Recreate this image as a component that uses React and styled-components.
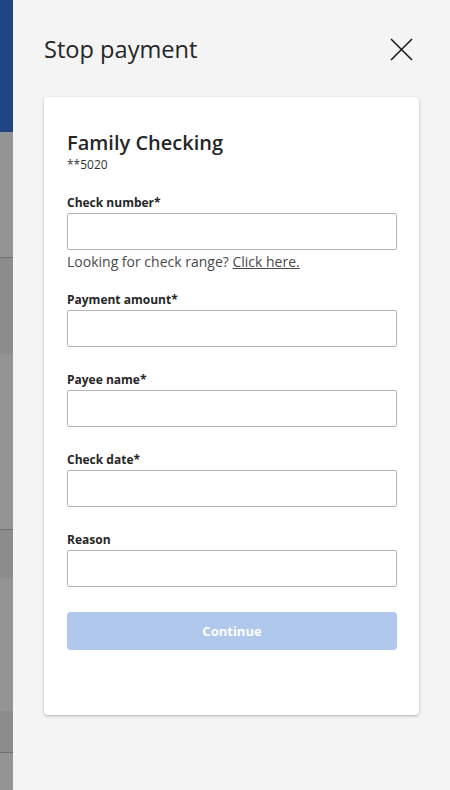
import React from 'react';
import styled, { createGlobalStyle } from 'styled-components';

const GlobalStyle = createGlobalStyle`
  html, body {
    margin: 0;
    padding: 0;
    background: #f4f4f4;
  }
  body {
    font-family: "Open Sans", "Noto Sans", sans-serif;
    color: #262626;
  }
  * {
    box-sizing: border-box;
  }
`;

const Page = styled.div`
  display: flex;
  width: 450px;
  height: 790px;
  overflow: hidden;
`;

const Strip = styled.div`
  display: flex;
  flex-direction: column;
  width: 13px;
  flex-shrink: 0;
`;

const tones = {
  blue: '#1f4582',
  gray: '#949494',
  dark: '#8c8c8c',
  line: '#707070',
};

const StripBlock = styled.div`
  height: ${(p) => p.$h}px;
  flex-shrink: 0;
  background: ${(p) => tones[p.$tone]};
`;

const StripRest = styled.div`
  flex: 1;
  background: ${tones.gray};
`;

const Panel = styled.div`
  flex: 1;
  background: #f4f4f4;
  padding: 33px 31px 0 31px;
`;

const Header = styled.div`
  display: flex;
  align-items: center;
  justify-content: space-between;
  height: 32px;
  padding-right: 6px;
`;

const Title = styled.h1`
  margin: 0;
  font-size: 23.6px;
  line-height: 32px;
  font-weight: 400;
  color: #262626;
`;

const CloseButton = styled.button`
  display: flex;
  align-items: center;
  justify-content: center;
  width: 23px;
  height: 23px;
  padding: 0;
  border: none;
  background: none;
  cursor: pointer;
  color: #1a1a1a;
`;

const Card = styled.div`
  margin-top: 32px;
  background: #ffffff;
  border-radius: 4px;
  box-shadow: 0 1px 3px rgba(0, 0, 0, 0.28);
  padding: 32px 22px 65px 23px;
`;

const AccountName = styled.h2`
  margin: 0;
  font-size: 20px;
  line-height: 28px;
  font-weight: 600;
  color: #262626;
`;

const AccountNumber = styled.div`
  font-size: 12px;
  line-height: 16px;
  color: #333333;
`;

const Form = styled.form`
  display: flex;
  flex-direction: column;
  gap: 25px;
  margin-top: 22px;
`;

const Field = styled.div`
  display: flex;
  flex-direction: column;
`;

const Label = styled.label`
  font-size: 12px;
  line-height: 16px;
  font-weight: 700;
  color: #262626;
  margin-bottom: 2px;
`;

const Input = styled.input`
  width: 100%;
  height: 37px;
  border: 1px solid #b5b5b5;
  border-radius: 2px;
  background: #fff;
  font-family: inherit;
  font-size: 14px;
  padding: 0 10px;
  outline: none;
`;

const Helper = styled.div`
  margin: 4px 0 -3px;
  font-size: 14px;
  line-height: 16px;
  color: #4a4a4a;

  a {
    color: #4a4a4a;
    text-decoration: underline;
  }
`;

const Submit = styled.button`
  height: 38px;
  width: 100%;
  border: none;
  border-radius: 4px;
  background: #b0c8ec;
  color: #ffffff;
  font-family: inherit;
  font-size: 13px;
  font-weight: 700;
  cursor: not-allowed;
`;

const stripBlocks = [
  { h: 132, tone: 'blue' },
  { h: 125, tone: 'gray' },
  { h: 1, tone: 'line' },
  { h: 96, tone: 'dark' },
  { h: 175, tone: 'gray' },
  { h: 1, tone: 'line' },
  { h: 48, tone: 'dark' },
  { h: 133, tone: 'gray' },
  { h: 41, tone: 'dark' },
  { h: 1, tone: 'line' },
];

const fields = [
  { id: 'check-number', label: 'Check number*', helper: true },
  { id: 'payment-amount', label: 'Payment amount*' },
  { id: 'payee-name', label: 'Payee name*' },
  { id: 'check-date', label: 'Check date*' },
  { id: 'reason', label: 'Reason' },
];

const CloseIcon = () => (
  <svg width="23" height="23" viewBox="0 0 23 23" fill="none" stroke="currentColor" strokeWidth="1.6">
    <path d="M1 1 L22 22 M22 1 L1 22" />
  </svg>
);

const App = () => {
  return (
    <Page>
      <GlobalStyle />
      <Strip>
        {stripBlocks.map((b, i) => (
          <StripBlock key={i} $h={b.h} $tone={b.tone} />
        ))}
        <StripRest />
      </Strip>
      <Panel>
        <Header>
          <Title>Stop payment</Title>
          <CloseButton type="button" aria-label="Close">
            <CloseIcon />
          </CloseButton>
        </Header>
        <Card>
          <AccountName>Family Checking</AccountName>
          <AccountNumber>**5020</AccountNumber>
          <Form onSubmit={(e) => e.preventDefault()}>
            {fields.map((f) => (
              <Field key={f.id}>
                <Label htmlFor={f.id}>{f.label}</Label>
                <Input id={f.id} type="text" />
                {f.helper && (
                  <Helper>
                    Looking for check range? <a href="#">Click here.</a>
                  </Helper>
                )}
              </Field>
            ))}
            <Submit type="submit" disabled>Continue</Submit>
          </Form>
        </Card>
      </Panel>
    </Page>
  );
};

export default App;
